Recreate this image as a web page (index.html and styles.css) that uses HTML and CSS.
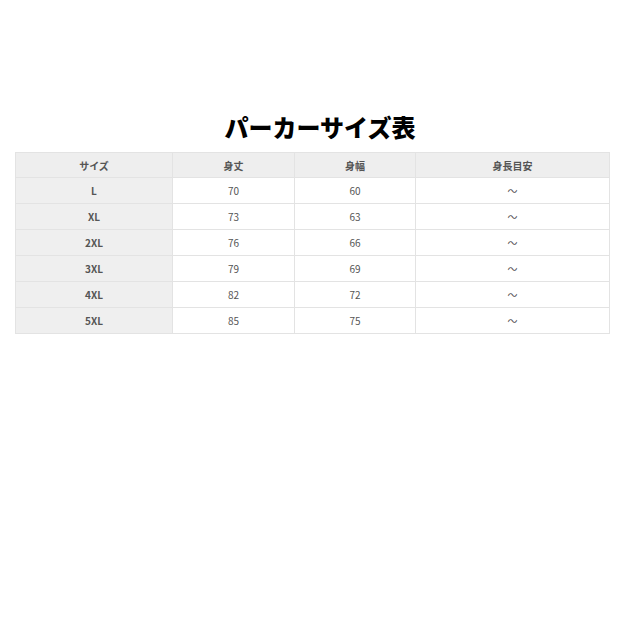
FILE: index.html
```html
<!DOCTYPE html>
<html lang="ja">
<head>
<meta charset="utf-8">
<title>パーカーサイズ表</title>
<link rel="stylesheet" href="styles.css">
</head>
<body>
<div class="page">
  <h1 class="title">パーカーサイズ表</h1>
  <table class="size-table">
    <thead>
      <tr><th class="c1">サイズ</th><th class="c2">身丈</th><th class="c3">身幅</th><th class="c4">身長目安</th></tr>
    </thead>
    <tbody>
      <tr><th>L</th><td>70</td><td>60</td><td>～</td></tr>
      <tr><th>XL</th><td>73</td><td>63</td><td>～</td></tr>
      <tr><th>2XL</th><td>76</td><td>66</td><td>～</td></tr>
      <tr><th>3XL</th><td>79</td><td>69</td><td>～</td></tr>
      <tr><th>4XL</th><td>82</td><td>72</td><td>～</td></tr>
      <tr><th>5XL</th><td>85</td><td>75</td><td>～</td></tr>
    </tbody>
  </table>
</div>
</body>
</html>
```
FILE: styles.css
```css
html, body {
  margin: 0;
  padding: 0;
  background: #ffffff;
}
.page {
  width: 640px;
  padding-top: 108px;
  font-family: "Noto Sans CJK JP", "Noto Sans", sans-serif;
}
.title {
  margin: 0 0 7px 0;
  text-align: center;
  font-size: 24px;
  line-height: 37px;
  font-weight: 900;
  color: #000;
  letter-spacing: 0;
}
.size-table {
  margin-left: 15px;
  width: 595px;
  border-collapse: collapse;
  table-layout: fixed;
  font-size: 10px;
  color: #555;
}
.size-table th,
.size-table td {
  border: 1px solid #e3e3e3;
  text-align: center;
  padding: 0;
  height: 25px;
}
.size-table thead th {
  background: #eeeeee;
  font-weight: bold;
  height: 24px;
  color: #555;
}
.size-table tbody th {
  background: #efefef;
  font-weight: bold;
}
.size-table tbody td {
  background: #fff;
  font-weight: normal;
}
.c1 { width: 156px; }
.c2 { width: 121px; }
.c3 { width: 120px; }
.c4 { width: auto; }
```
